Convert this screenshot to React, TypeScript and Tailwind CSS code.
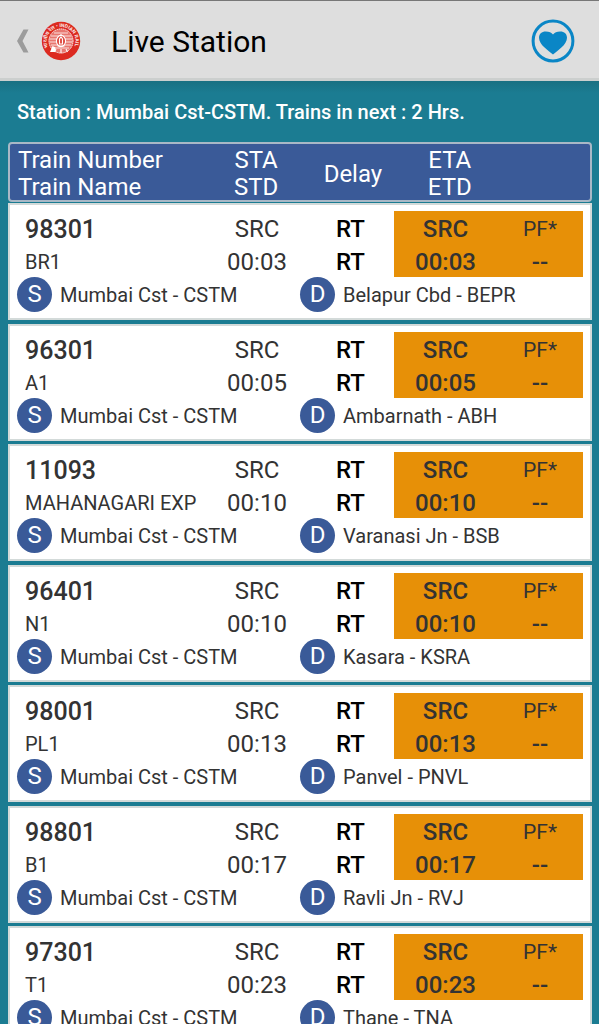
interface Train {
  number: string;
  name: string;
  time: string;
  destination: string;
}

const SOURCE = 'Mumbai Cst - CSTM';

const trains: Train[] = [
  { number: '98301', name: 'BR1', time: '00:03', destination: 'Belapur Cbd - BEPR' },
  { number: '96301', name: 'A1', time: '00:05', destination: 'Ambarnath - ABH' },
  { number: '11093', name: 'MAHANAGARI EXP', time: '00:10', destination: 'Varanasi Jn - BSB' },
  { number: '96401', name: 'N1', time: '00:10', destination: 'Kasara - KSRA' },
  { number: '98001', name: 'PL1', time: '00:13', destination: 'Panvel - PNVL' },
  { number: '98801', name: 'B1', time: '00:17', destination: 'Ravli Jn - RVJ' },
  { number: '97301', name: 'T1', time: '00:23', destination: 'Thane - TNA' },
];

function RailwayLogo() {
  return (
    <svg viewBox="0 0 40 40" className="size-10 overflow-visible" aria-hidden="true">
      <defs>
        <path id="ring" d="M7.200 26.500 A14.300 14.300 0 1 1 33 26.500" />
      </defs>
      <circle cx="20" cy="20" r="19.2" fill="#dc2a20" />
      <text fontSize="5" fontWeight="700" fill="#fbe6e4" fontFamily="Roboto, 'Noto Sans', sans-serif">
        <textPath href="#ring">भारतीय रेल • INDIAN RAILWAY</textPath>
      </text>
      <circle cx="20" cy="20" r="12.4" fill="#e87770" />
      <circle cx="20" cy="20" r="12" fill="none" stroke="#fbe9e7" strokeWidth="1" strokeDasharray="1.2 0.8" />
      <path d="M10 15h20M8.6 18h22.8M8.6 21h22.8M10 24h20M12 27h16M13 12h14" stroke="#f9dfdc" strokeWidth="1.1" />
      <ellipse cx="20" cy="20" rx="4.6" ry="5.6" fill="#e04a41" stroke="#fff" strokeWidth="1.1" />
      <path d="M18.5 23v-5l1.5-2 1.500 2v5zM16.5 25h7M20 13v2M15 28l-1.5 3M25 28l1.5 3M20 28v4" fill="none" stroke="#fff" strokeWidth="1.1" />
      <path d="M9 31l2.500-6 3 1.500-.5 4.500z" fill="#fff" />
    </svg>
  );
}

function Header() {
  return (
    <header className="flex h-[81px] items-center border-t border-b-[3px] border-t-[#777] border-b-[#cccfce] bg-[#dedede] pt-[3px] pr-6 pl-4">
      <button type="button" aria-label="Back" className="flex items-center gap-3">
        <svg viewBox="0 0 13 24" className="h-6 w-[13px]" aria-hidden="true">
          <path d="M7.500 0.5h5L6.500 12l6 11.5h-5L1 12z" fill="#9c9c9c" />
        </svg>
        <RailwayLogo />
      </button>
      <h1 className="ml-[30px] flex-1 pt-px text-[30px] leading-9 text-black">Live Station</h1>
      <button type="button" aria-label="Add to favourites">
        <svg viewBox="0 0 44 44" className="size-11" aria-hidden="true">
          <circle cx="22" cy="22" r="19.9" fill="none" stroke="#0a86c6" strokeWidth="3" />
          <path
            d="M22 35.5C17.5 31.5 8 26 8 18.8c0-4 2.6-6.3 6.8-6.3 3.4 0 5.7 1 7.2 3 1.5-2 3.8-3 7.2-3 4.2 0 6.8 2.3 6.8 6.3C36 26 26.5 31.5 22 35.5z"
            fill="#0a86c6"
          />
        </svg>
      </button>
    </header>
  );
}

function Badge({ letter }: { letter: string }) {
  return (
    <span className="flex size-[35px] shrink-0 items-center justify-center rounded-full bg-[#3a5a98] pb-0.5 text-2xl text-white">
      {letter}
    </span>
  );
}

function TrainCard({ train }: { train: Train }) {
  return (
    <tbody className="mb-[3px] block border-2 border-[#d3dad9] bg-white px-[7px] py-1.5 text-[#333] even:mb-1">
      <tr className="grid grid-cols-[190fr_100fr_87fr_103fr_86fr] text-center text-2xl leading-[29px] *:pt-1">
        <th scope="row" className="pl-2 text-left text-[25px] font-medium">{train.number}</th>
        <td>SRC</td>
        <td className="font-medium text-black">RT</td>
        <td className="bg-[#e79007] font-medium">SRC</td>
        <td className="bg-[#e79007] text-[21px]">PF*</td>
      </tr>
      <tr className="grid grid-cols-[190fr_100fr_87fr_103fr_86fr] text-center text-2xl leading-[29px] *:pt-1">
        <td className="pl-2 text-left text-[20px] whitespace-nowrap">{train.name}</td>
        <td>{train.time}</td>
        <td className="font-medium text-black">RT</td>
        <td className="bg-[#e79007] font-medium">{train.time}</td>
        <td className="bg-[#e79007] font-medium">--</td>
      </tr>
      <tr className="grid grid-cols-2 text-[20px] leading-[33px]">
        <td className="flex items-center gap-2">
          <Badge letter="S" />
          <span className="pt-0.5">{SOURCE}</span>
        </td>
        <td className="flex items-center gap-2">
          <Badge letter="D" />
          <span className="pt-0.5">{train.destination}</span>
        </td>
      </tr>
    </tbody>
  );
}

export default function App() {
  return (
    <div className="h-screen overflow-hidden bg-[#1b7c92] font-[Roboto,'Liberation_Sans',sans-serif]">
      <Header />
      <main className="bg-linear-to-b from-[#1a7082] to-[#1b7c92] to-[12px] pr-[7px] pl-2">
        <p className="px-[9px] pt-4 pb-[15px] text-xl leading-[30px] font-medium text-white">
          Station : Mumbai Cst-CSTM. Trains in next : 2 Hrs.
        </p>
        <table className="block">
          <thead className="mb-px block rounded-sm border-2 border-[#a9b8c6] bg-[#3a5a98] text-2xl leading-[27px] text-white">
            <tr className="grid grid-cols-[198fr_97fr_97fr_97fr_92fr] items-center pt-[3px] text-center *:-mb-px">
              <th scope="col" className="pl-2 text-left font-normal">
                Train Number
                <br />
                Train Name
              </th>
              <th scope="col" className="font-normal">
                STA
                <br />
                STD
              </th>
              <th scope="col" className="font-normal">Delay</th>
              <th scope="col" className="font-normal">
                ETA
                <br />
                ETD
              </th>
              <td />
            </tr>
          </thead>
          {trains.map((train) => (
            <TrainCard key={train.number} train={train} />
          ))}
        </table>
      </main>
    </div>
  );
}
